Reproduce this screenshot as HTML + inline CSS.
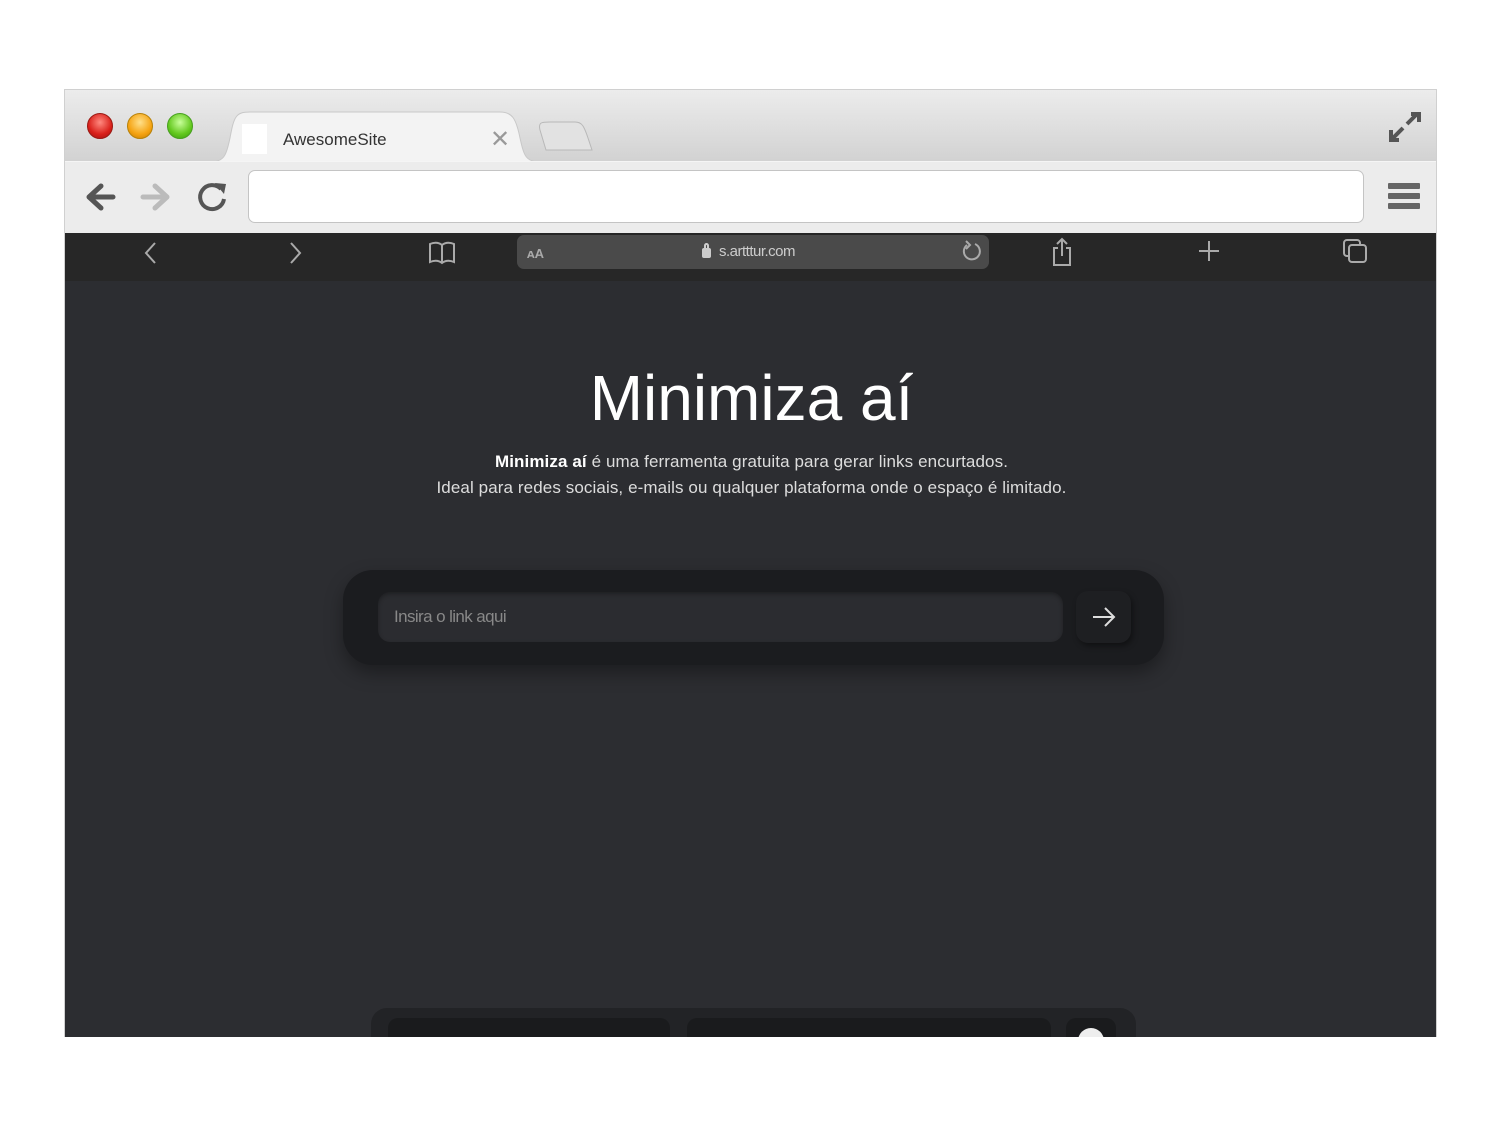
<!DOCTYPE html>
<html><head><meta charset="utf-8"><style>
*{margin:0;padding:0;box-sizing:border-box}
body{width:1500px;height:1125px;background:#fff;position:relative;overflow:hidden;font-family:"Liberation Sans",sans-serif}
.abs{position:absolute}
#frame{left:64px;top:89px;width:1373px;height:948px;overflow:hidden;border:1px solid #d0d0d0;border-bottom:none}
#title{left:0;top:0;width:1373px;height:71px;background:linear-gradient(#ececec,#d2d2d2)}
#tool{left:0;top:71px;width:1373px;height:72px;background:#ececec;border-top:1px solid #f5f5f5}
.dot{width:26px;height:26px;border-radius:50%;top:23px}
#dark{left:0;top:143px;width:1373px;height:48px;background:#272727}
#content{left:0;top:191px;width:1373px;height:760px;background:#2c2d31}
</style></head><body>
<div id="frame" class="abs">
 <div id="title" class="abs">
  <div class="abs dot" style="left:22px;background:radial-gradient(circle at 50% 35%,#ff8a80,#d9201a 60%,#a01010);border:1px solid #9a1a14"></div>
  <div class="abs dot" style="left:62px;background:radial-gradient(circle at 50% 35%,#ffe08a,#f5a312 60%,#c57a00);border:1px solid #b8820a"></div>
  <div class="abs dot" style="left:102px;background:radial-gradient(circle at 50% 35%,#c8ff9a,#63c81e 60%,#3a9a10);border:1px solid #48a020"></div>
  <svg class="abs" style="left:145px;top:18px" width="390" height="54"><path d="M0 54 C14 54 16 48 20 30 C24 8 26 4 40 4 L290 4 C302 4 306 10 310 30 C314 48 316 54 330 54 Z" fill="#f3f3f3" stroke="#c8c8c8"/><path d="M330 22 C328 14 332 14 340 14 L365 14 C372 14 374 18 378 30 L382 42 L336 42 Z" fill="#e2e2e2" stroke="#b8b8b8"/></svg>
  <div class="abs" style="left:177px;top:34px;width:25px;height:30px;background:#fff"></div>
  <div class="abs" style="left:218px;top:40px;font-size:17px;color:#333">AwesomeSite</div>
  <div class="abs" style="left:425px;top:35px;font-size:24px;color:#999">✕</div>
  <svg class="abs" style="left:1324px;top:20px" width="32" height="32"><path d="M18 14 L28 4 M22 4 H30 V12 M14 18 L4 28 M2 20 V30 H10" stroke="#555" stroke-width="4" fill="none"/></svg>
 </div>
 <div id="tool" class="abs">
  <svg class="abs" style="left:18px;top:19px" width="36" height="32"><path d="M30 16 H8 M18 5 L6 16 L18 27" stroke="#555" stroke-width="5" fill="none" stroke-linecap="round" stroke-linejoin="round"/></svg>
  <svg class="abs" style="left:74px;top:19px" width="36" height="32"><path d="M4 16 H26 M16 5 L28 16 L16 27" stroke="#bbb" stroke-width="5" fill="none" stroke-linecap="round" stroke-linejoin="round"/></svg>
  <svg class="abs" style="left:130px;top:17px" width="36" height="36"><path d="M26 10 A12 12 0 1 0 29 20" stroke="#555" stroke-width="4" fill="none"/><path d="M20 4 L31 5 L29 15 Z" fill="#555"/></svg>
  <div class="abs" style="left:183px;top:8px;width:1116px;height:53px;background:#fff;border:1px solid #c4c4c4;border-radius:7px"></div>
  <div class="abs" style="left:1323px;top:21px;width:32px;height:6px;background:#666;border-radius:1px"></div>
  <div class="abs" style="left:1323px;top:31px;width:32px;height:6px;background:#666;border-radius:1px"></div>
  <div class="abs" style="left:1323px;top:41px;width:32px;height:6px;background:#666;border-radius:1px"></div>
 </div>
 <div id="dark" class="abs">
  <svg class="abs" style="left:76px;top:6px" width="20" height="28"><path d="M14 4 L5 14 L14 24" stroke="#aaa" stroke-width="2" fill="none"/></svg>
  <svg class="abs" style="left:220px;top:6px" width="20" height="28"><path d="M6 4 L15 14 L6 24" stroke="#aaa" stroke-width="2" fill="none"/></svg>
  <svg class="abs" style="left:362px;top:6px" width="32" height="28"><path d="M3 5 Q10 2 15 6 Q20 2 27 5 V23 Q20 20 15 24 Q10 20 3 23 Z M15 6 V24" stroke="#aaa" stroke-width="2" fill="none"/></svg>
  <div class="abs" style="left:452px;top:2px;width:472px;height:34px;background:#4a4a4a;border-radius:7px"></div>
  <div class="abs" style="left:462px;top:13px;font-size:13px;font-weight:bold;color:#aaa">ᴀA</div>
  <div class="abs" style="left:637px;top:15px;width:9px;height:10px;background:#ccc;border-radius:2px"></div>
  <div class="abs" style="left:639px;top:10px;width:5px;height:8px;border:2px solid #ccc;border-radius:3px 3px 0 0"></div>
  <div class="abs" style="left:654px;top:10px;font-size:15px;color:#ccc;letter-spacing:-0.5px">s.artttur.com</div>
  <svg class="abs" style="left:894px;top:6px" width="24" height="24"><path d="M16 5 A8 8 0 1 1 8 6" stroke="#aaa" stroke-width="2" fill="none"/><path d="M7 2 L11 6 L7 10" stroke="#aaa" stroke-width="2" fill="none"/></svg>
  <svg class="abs" style="left:984px;top:3px" width="28" height="32"><path d="M9 12 H5 V29 H21 V12 H17 M13 20 V3 M8 8 L13 3 L18 8" stroke="#aaa" stroke-width="2" fill="none"/></svg>
  <svg class="abs" style="left:1132px;top:6px" width="24" height="24"><path d="M12 2 V22 M2 12 H22" stroke="#aaa" stroke-width="2"/></svg>
  <svg class="abs" style="left:1276px;top:4px" width="30" height="28"><rect x="3" y="3" width="16" height="16" rx="3" stroke="#aaa" stroke-width="2" fill="none"/><rect x="8" y="8" width="17" height="17" rx="3" stroke="#aaa" stroke-width="2" fill="#272727"/></svg>
 </div>
 <div id="content" class="abs">
  <div class="abs" style="left:0;width:1373px;top:80px;text-align:center;font-size:64px;color:#fff">Minimiza aí</div>
  <div class="abs" style="left:0;width:1373px;top:168px;text-align:center;font-size:17px;color:#ddd;line-height:26px;letter-spacing:0.1px">
   <b style="color:#fff">Minimiza aí</b> é uma ferramenta gratuita para gerar links encurtados.<br>Ideal para redes sociais, e-mails ou qualquer plataforma onde o espaço é limitado.</div>
  <div class="abs" style="left:278px;top:289px;width:821px;height:95px;background:#1b1c1f;border-radius:30px;box-shadow:0 8px 18px rgba(0,0,0,.35)"></div>
  <div class="abs" style="left:313px;top:311px;width:685px;height:50px;background:#2b2c30;border-radius:12px;box-shadow:inset 0 2px 4px rgba(0,0,0,.3)"></div>
  <div class="abs" style="left:329px;top:326px;font-size:17px;color:#888;letter-spacing:-0.6px">Insira o link aqui</div>
  <div class="abs" style="left:1011px;top:310px;width:55px;height:52px;background:#1e1f22;border-radius:12px;box-shadow:2px 3px 6px rgba(0,0,0,.4)"></div>
  <svg class="abs" style="left:1025px;top:323px" width="28" height="26"><path d="M3 13 H24 M15 4 L24 13 L15 22" stroke="#ddd" stroke-width="2" fill="none"/></svg>
  <div class="abs" style="left:306px;top:727px;width:765px;height:60px;background:#222326;border-radius:16px"></div>
  <div class="abs" style="left:323px;top:737px;width:282px;height:40px;background:#1a1b1d;border-radius:10px"></div>
  <div class="abs" style="left:622px;top:737px;width:364px;height:40px;background:#1a1b1d;border-radius:10px"></div>
  <div class="abs" style="left:1001px;top:737px;width:50px;height:40px;background:#1a1b1d;border-radius:10px"></div>
  <div class="abs" style="left:1013px;top:747px;width:26px;height:26px;background:#eee;border-radius:50%"></div>
 </div>
</div>
</body></html>
